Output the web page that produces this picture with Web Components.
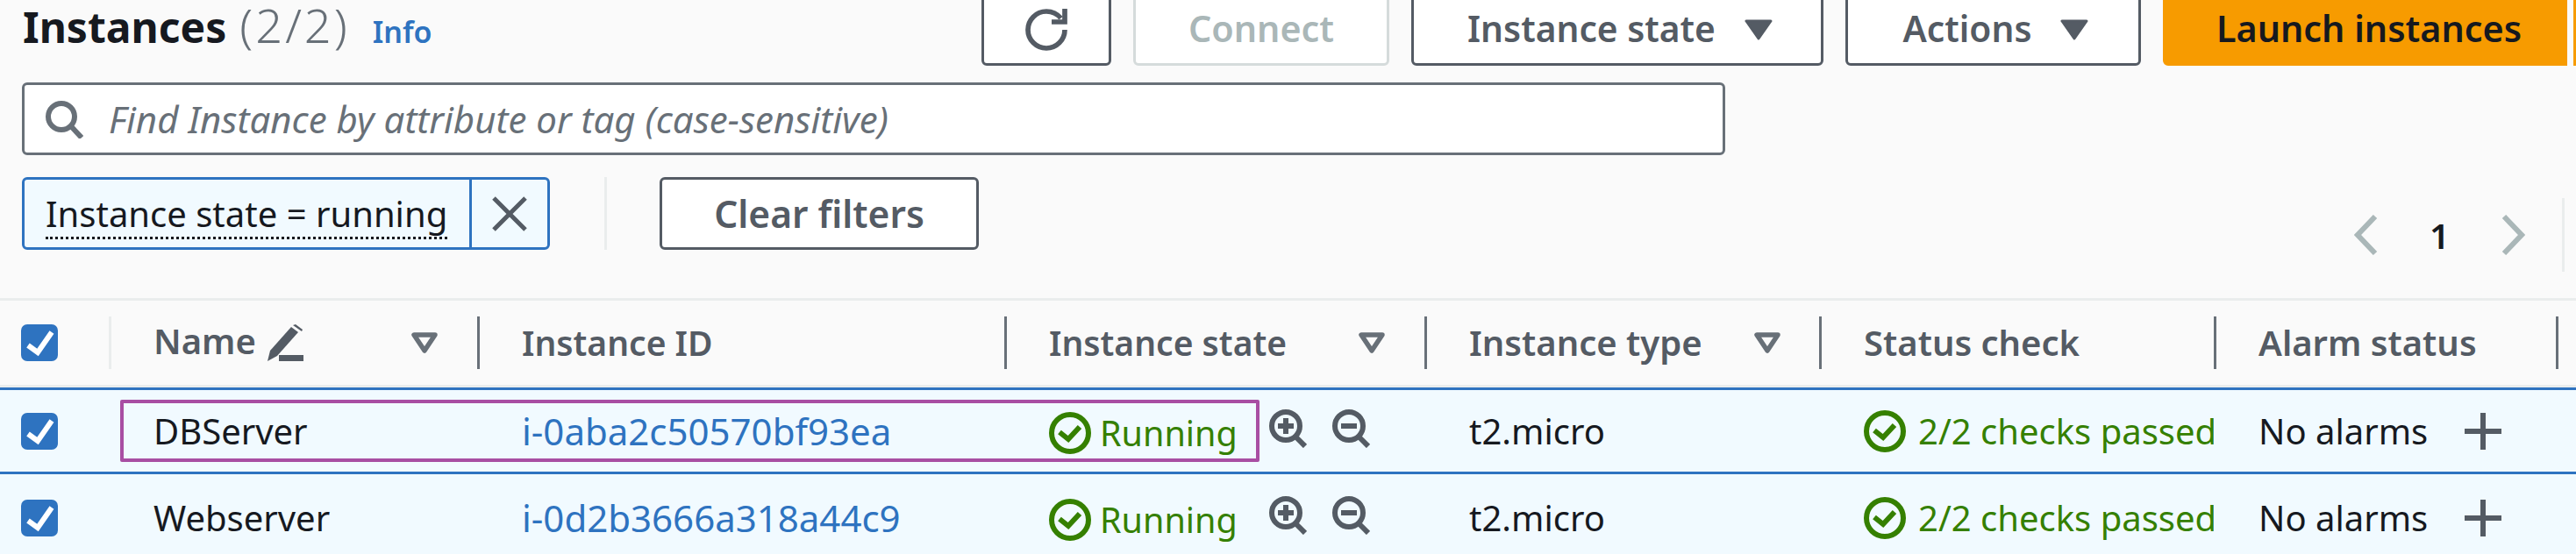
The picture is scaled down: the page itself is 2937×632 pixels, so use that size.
<!DOCTYPE html>
<html lang="en"><head><meta charset="utf-8"><title>Instances</title>
<style>
html,body{margin:0;padding:0;background:#fafafa;width:2937px;height:632px;overflow:hidden;font-family:"Noto Sans",sans-serif;color:#16191f}
</style></head><body>
<ec2-toolbar>
  <ec2-title slot="title" count="(2/2)">Instances</ec2-title>
  <ec2-button icon="refresh" w="148"></ec2-button>
  <ec2-button w="292" disabled>Connect</ec2-button>
  <ec2-button w="470" caret>Instance state</ec2-button>
  <ec2-button w="337" caret>Actions</ec2-button>
  <ec2-button w="461" primary>Launch instances</ec2-button>
</ec2-toolbar>
<ec2-search>Find Instance by attribute or tag (case-sensitive)</ec2-search>
<ec2-filters>
  <ec2-chip>Instance state = running</ec2-chip>
</ec2-filters>
<ec2-table>
  <ec2-head>
    <ec2-cell head first><ec2-check></ec2-check></ec2-cell>
    <ec2-cell head light sort="45" edit><span style="margin-top:-4px">Name</span></ec2-cell>
    <ec2-cell head style="font-size:39px">Instance ID</ec2-cell>
    <ec2-cell head sort="45" style="font-size:39px">Instance state</ec2-cell>
    <ec2-cell head sort="44">Instance type</ec2-cell>
    <ec2-cell head>Status check</ec2-cell>
    <ec2-cell head>Alarm status</ec2-cell>
    <ec2-cell head></ec2-cell>
  </ec2-head>
  <ec2-row marked>
    <ec2-cell first><ec2-check></ec2-check></ec2-cell>
    <ec2-cell>DBServer</ec2-cell>
    <ec2-cell><ec2-link>i-0aba2c50570bf93ea</ec2-link></ec2-cell>
    <ec2-cell><ec2-state></ec2-state></ec2-cell>
    <ec2-cell>t2.micro</ec2-cell>
    <ec2-cell><ec2-status></ec2-status></ec2-cell>
    <ec2-cell><ec2-alarm></ec2-alarm></ec2-cell>
    <ec2-cell></ec2-cell>
  </ec2-row>
  <ec2-row second>
    <ec2-cell first><ec2-check></ec2-check></ec2-cell>
    <ec2-cell>Webserver</ec2-cell>
    <ec2-cell><ec2-link>i-0d2b3666a318a44c9</ec2-link></ec2-cell>
    <ec2-cell><ec2-state></ec2-state></ec2-cell>
    <ec2-cell>t2.micro</ec2-cell>
    <ec2-cell><ec2-status></ec2-status></ec2-cell>
    <ec2-cell><ec2-alarm></ec2-alarm></ec2-cell>
    <ec2-cell></ec2-cell>
  </ec2-row>
</ec2-table>
<script>
const COLS='124px 420px 601px 479px 450px 450px 390px 23px';
function def(name,render){
  customElements.define(name,class extends HTMLElement{
    connectedCallback(){ if(this.shadowRoot) return; this.attachShadow({mode:'open'}).innerHTML=render(this); }
  });
}
def('ec2-title',h=>`<style>:host{display:flex;align-items:baseline;font-size:48px;line-height:54px}
b{font-weight:700;color:#16191f}span{font-size:54px;letter-spacing:3px;font-weight:300;color:#687078;margin-left:15px}a{font-size:34px;font-weight:600;color:#2e73c0;margin-left:26px}</style>
<b><slot></slot></b><span>${h.getAttribute('count')}</span><a>Info</a>`);
def('ec2-toolbar',()=>`<style>:host{display:flex;height:75px;padding:0 0 0 26px;align-items:flex-end;box-sizing:border-box}
.t{flex:1;align-self:flex-end;margin-bottom:12px}.b{display:flex;gap:25px;align-items:flex-end;flex:none}
.sliver{flex:none;width:3px;margin-left:7px;height:75px;background:#f79b00}</style>
<div class="t"><slot name="title"></slot></div><div class="b"><slot></slot></div><div class="sliver"></div>`);
def('ec2-button',h=>{
  const w=h.getAttribute('w'),dis=h.hasAttribute('disabled'),pri=h.hasAttribute('primary'),hasCaret=h.hasAttribute('caret');
  const ic=h.getAttribute('icon')==='refresh'?`<svg width="48" height="48" viewBox="0 0 16 16" fill="none" stroke="#545b64" stroke-width="1.900"><path d="M10 5h5V0"/><path d="M15 8a7 7 0 0 1-7 7 7 7 0 0 1-7-7 7 7 0 0 1 7-7c2.200 0 4.200 1 5.500 2.600"/></svg>`:'';
  const car=hasCaret?`<svg width="32" height="24" viewBox="0 0 32 24" style="margin-left:33px"><path d="M2 2h28L16 22z" fill="#545b64" stroke="#545b64" stroke-width="3" stroke-linejoin="round"/></svg>`:'';
  return `<style>:host{display:block;flex:none}
  div{box-sizing:border-box;width:${w}px;height:83px;display:flex;align-items:center;justify-content:center;padding-left:${hasCaret?6:pri?9:0}px;
  border:3px solid ${pri?'#f79b00':dis?'#d5dbdb':'#545b64'};border-radius:6px;background:${pri?'#f79b00':'#fff'};
  font-weight:600;font-size:${hasCaret?40.7:41.3}px;line-height:54px;white-space:nowrap;color:${pri?'#16191f':dis?'#aab7b8':'#545b64'};${pri?'border-top-right-radius:0;border-bottom-right-radius:0;':''}}
  svg{flex:none}span{padding-bottom:3px}
  </style><div>${ic}<span><slot></slot></span>${car}</div>`;
});
def('ec2-search',()=>`<style>:host{display:flex;align-items:center;box-sizing:border-box;width:1942px;height:83px;margin:19px 0 0 25px;background:#fff;border:3px solid #687078;border-radius:6px;padding-left:23px;
font-style:italic;font-size:42px;color:#687078;white-space:nowrap}
svg{flex:none;margin-right:29px}</style>
<svg width="44" height="44" viewBox="0 0 44 44" fill="none" stroke="#687078" stroke-width="6"><circle cx="19" cy="19" r="15"/><path d="M29 29l13 14"/></svg><slot></slot>`);
def('ec2-filters',()=>`<style>:host{display:flex;align-items:stretch;height:83px;margin:25px 0 0 25px;position:relative}
.d{width:3px;background:#eaeded;margin-left:62px}
.c{box-sizing:border-box;width:364px;margin-left:60px;border:3px solid #545b64;border-radius:6px;background:#fff;font-weight:600;font-size:42.500px;color:#545b64;display:flex;align-items:center;justify-content:center;white-space:nowrap}
ec2-pager{position:absolute;left:2659px;top:24px}</style>
<slot></slot><div class="d"></div><div class="c">Clear filters</div><ec2-pager></ec2-pager>`);
def('ec2-chip',()=>`<style>:host{display:flex;box-sizing:border-box;width:602px;border:3px solid #2e73c0;border-radius:6px;background:#f1faff;font-size:40px;color:#16191f;white-space:nowrap}
.l{width:510px;box-sizing:border-box;border-right:3px solid #2e73c0;padding-left:24px;display:flex;align-items:center}
.t{border-bottom:3px dotted #16191f;line-height:52px;margin-top:4px}
.x{flex:1;display:flex;align-items:center;justify-content:center}</style>
<div class="l"><span class="t"><slot></slot></span></div><div class="x"><svg width="40" height="40" viewBox="0 0 40 40" stroke="#545b64" stroke-width="5" fill="none"><path d="M2 2l36 36M38 2L2 38"/></svg></div>`);
def('ec2-pager',()=>`<style>:host{display:flex;align-items:center;height:84px}
svg{flex:none}b{font-size:40px;font-weight:600;width:141px;text-align:center;color:#16191f}.d{width:3px;height:84px;background:#eaeded;margin-left:42px}</style>
<svg width="27" height="46" viewBox="0 0 27 46" fill="none" stroke="#aab7b8" stroke-width="6"><path d="M24 2L4 23l20 21"/></svg><b>1</b>
<svg width="27" height="46" viewBox="0 0 27 46" fill="none" stroke="#aab7b8" stroke-width="6"><path d="M3 2l20 21L3 44"/></svg><div class="d"></div>`);
def('ec2-table',()=>`<style>:host{display:block;margin-top:55px;border-top:3px solid #eaeded}</style><slot></slot>`);
def('ec2-head',()=>`<style>:host{display:grid;grid-template-columns:${COLS};height:96px;border-bottom:3px solid #eaeded;background:#fafafa;align-items:center}</style><slot></slot>`);
def('ec2-row',h=>`<style>:host{display:grid;grid-template-columns:${COLS};position:relative;box-sizing:border-box;height:99px;background:#f1faff;align-items:center;
${h.hasAttribute('second')?'':'border-top:3px solid #2e73c0;'}}
:host([marked]){border-bottom:3px solid #2e73c0}
.m{position:absolute;left:137px;top:11px;width:1299px;height:71px;box-sizing:border-box;border:4px solid #a84ea3;border-radius:2px;pointer-events:none}</style>
<slot></slot>${h.hasAttribute('marked')?'<div class="m"></div>':''}`);
def('ec2-cell',h=>{
  const head=h.hasAttribute('head'),first=h.hasAttribute('first'),light=h.hasAttribute('light'),sort=h.getAttribute('sort'),edit=h.hasAttribute('edit');
  const div=head&&!first?`<i style="flex:none;width:3px;height:60px;margin-right:48px;background:${light?'#eaeded':'#687078'}"></i>`:(first?'':'<i style="flex:none;width:51px"></i>');
  const pen=edit?`<svg width="42" height="42" viewBox="0 0 42 42" style="margin-left:12px;flex:none"><path d="M1 42l3-12L28 3l8 6-24 27z" fill="#545b64"/><path d="M30 1l3-1 8 6-1 2z" fill="#545b64"/><path d="M14 35h28v7H14z" fill="#545b64"/></svg>`:'';
  const s=sort?`<svg width="30" height="24" viewBox="0 0 30 24" style="position:absolute;right:${sort}px;flex:none" fill="none" stroke="#687078" stroke-width="5.500" stroke-linejoin="round"><path d="M3 3h24L15 21z"/></svg>`:'';
  return `<style>:host{display:flex;align-items:center;min-width:0;height:100%;position:relative;overflow:hidden;font-size:40px;line-height:54px;white-space:nowrap;
  ${head?'font-weight:600;color:#545b64;':'color:#16191f;'}${first?'padding-left:24px;':''}}</style>${div}<slot></slot>${pen}${s}`;
});
def('ec2-check',()=>`<style>:host{display:block;width:42px;height:42px;flex:none;background:#2e73c0;border-radius:7px}svg{display:block}</style>
<svg width="42" height="42" viewBox="0 0 42 42" fill="none" stroke="#fff" stroke-width="6"><path d="M8 24l11 8 16-23"/></svg>`);
def('ec2-link',()=>`<style>:host{color:#2e73c0;font-size:42px}</style><slot></slot>`);
def('ec2-state',()=>`<style>:host{display:flex;align-items:center;color:#358000;white-space:nowrap;flex:none}svg{flex:none}
.c{margin-top:5px}span{margin-left:10px;padding-top:4px;font-size:39.500px}.z{margin:-5px 0 0 35px}.z2{margin:-5px 0 0 28px}</style>
<svg class="c" width="48" height="48" viewBox="0 0 48 48" fill="none" stroke="#358000" stroke-width="6"><circle cx="24" cy="24" r="21"/><path d="M12 23l10 8 13-14"/></svg>
<span>Running</span>
<svg class="z" width="44" height="44" viewBox="0 0 44 44" fill="none" stroke="#545b64" stroke-width="6"><circle cx="20" cy="19" r="16"/><path d="M31 31l11 11"/><path d="M11 19h18"/><path d="M20 10v18"/></svg>
<svg class="z2" width="44" height="44" viewBox="0 0 44 44" fill="none" stroke="#545b64" stroke-width="6"><circle cx="20" cy="19" r="16"/><path d="M31 31l11 11"/><path d="M11 19h18"/></svg>`);
def('ec2-status',()=>`<style>:host{display:flex;align-items:center;color:#358000;white-space:nowrap}svg{flex:none;margin-right:14px}</style>
<svg width="48" height="48" viewBox="0 0 48 48" fill="none" stroke="#358000" stroke-width="6"><circle cx="24" cy="24" r="21"/><path d="M12 23l10 8 13-14"/></svg><span>2/2 checks passed</span>`);
def('ec2-alarm',()=>`<style>:host{display:flex;align-items:center;color:#16191f}svg{flex:none;margin-left:42px}</style>
<span>No alarms</span><svg width="42" height="42" viewBox="0 0 42 42" stroke="#545b64" stroke-width="6" fill="none"><path d="M0 21h42M21 0v42"/></svg>`);
</script>
</body></html>
